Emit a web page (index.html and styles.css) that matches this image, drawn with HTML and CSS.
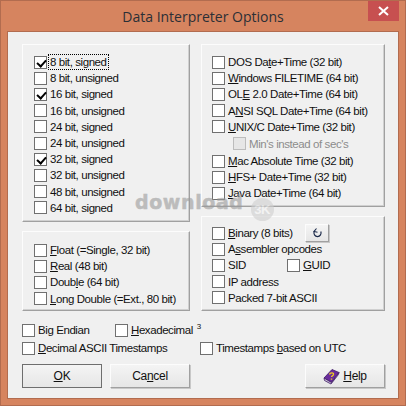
FILE: index.html
```
<!DOCTYPE html>
<html>
<head lang="en">
    <meta charset="UTF-8">
    <title>Data Interpreter Options</title>
    <link rel="stylesheet" href="styles.css">
</head>
<body>
<div class="window">
    <div class="titlebar">
        <span class="title">Data Interpreter Options</span>
        <span class="close">
            <svg width="11" height="10" viewBox="0 0 11 10"><path d="M1 1L10 9M10 1L1 9" stroke="#fff" stroke-width="2" fill="none"/></svg>
        </span>
    </div>
    <div class="client">
        <div class="columns">
            <div class="col col_left">
                <div class="panel panel_ints">
                    <label class="row"><span class="box on"></span><span class="focus">8 bit, signed</span></label>
                    <label class="row"><span class="box"></span><span>8 bit, unsigned</span></label>
                    <label class="row"><span class="box on"></span><span>16 bit, signed</span></label>
                    <label class="row"><span class="box"></span><span>16 bit, unsigned</span></label>
                    <label class="row"><span class="box"></span><span>24 bit, signed</span></label>
                    <label class="row"><span class="box"></span><span>24 bit, unsigned</span></label>
                    <label class="row"><span class="box on"></span><span>32 bit, signed</span></label>
                    <label class="row"><span class="box"></span><span>32 bit, unsigned</span></label>
                    <label class="row"><span class="box"></span><span>48 bit, unsigned</span></label>
                    <label class="row"><span class="box"></span><span>64 bit, signed</span></label>
                </div>
                <div class="panel panel_floats">
                    <label class="row"><span class="box"></span><span><u>F</u>loat (=Single, 32 bit)</span></label>
                    <label class="row"><span class="box"></span><span><u>R</u>eal (48 bit)</span></label>
                    <label class="row"><span class="box"></span><span>Doub<u>l</u>e (64 bit)</span></label>
                    <label class="row"><span class="box"></span><span><u>L</u>ong Double (=Ext., 80 bit)</span></label>
                </div>
            </div>
            <div class="col col_right">
                <div class="panel panel_dates">
                    <label class="row"><span class="box"></span><span>DOS Da<u>t</u>e+Time (32 bit)</span></label>
                    <label class="row"><span class="box"></span><span><u>W</u>indows FILETIME (64 bit)</span></label>
                    <label class="row"><span class="box"></span><span>OL<u>E</u> 2.0 Date+Time (64 bit)</span></label>
                    <label class="row"><span class="box"></span><span>A<u>N</u>SI SQL Date+Time (64 bit)</span></label>
                    <label class="row"><span class="box"></span><span><u>U</u>NIX/C Date+Time (32 bit)</span></label>
                    <label class="row row_sub disabled"><span class="box"></span><span>Min's instead of sec's</span></label>
                    <label class="row"><span class="box"></span><span><u>M</u>ac Absolute Time (32 bit)</span></label>
                    <label class="row"><span class="box"></span><span><u>H</u>FS+ Date+Time (32 bit)</span></label>
                    <label class="row"><span class="box"></span><span><u>J</u>ava Date+Time (64 bit)</span></label>
                </div>
                <div class="panel panel_misc">
                    <div class="row">
                        <label class="cell cell_binary"><span class="box"></span><span><u>B</u>inary (8 bits)</span></label>
                        <button class="btn btn_small">
                            <svg width="11" height="11" viewBox="0 0 11 11"><path d="M2.2 3.5A3.6 3.6 0 1 0 8.8 3.5" stroke="#1b2a4a" stroke-width="1.2" fill="none"/><path d="M4.5 0.5L2 3.5L5.5 4.2" stroke="#1b2a4a" stroke-width="1.1" fill="none"/></svg>
                        </button>
                    </div>
                    <label class="row"><span class="box"></span><span>A<u>s</u>sembler opcodes</span></label>
                    <div class="row">
                        <label class="cell cell_sid"><span class="box"></span><span>SID</span></label>
                        <label class="cell"><span class="box"></span><span><u>G</u>UID</span></label>
                    </div>
                    <label class="row"><span class="box"></span><span>IP address</span></label>
                    <label class="row"><span class="box"></span><span>Packed 7-bit ASCII</span></label>
                </div>
            </div>
        </div>
        <div class="options">
            <div class="opt_row">
                <label class="cell cell_big"><span class="box"></span><span>Bi<u>g</u> Endian</span></label>
                <label class="cell"><span class="box"></span><span><u>H</u>exadecimal <sup class="note">3</sup></span></label>
            </div>
            <div class="opt_row">
                <label class="cell cell_dec"><span class="box"></span><span><u>D</u>ecimal ASCII Timestamps</span></label>
                <label class="cell"><span class="box"></span><span>Timestamps <u>b</u>ased on UTC</span></label>
            </div>
        </div>
        <div class="buttons">
            <button class="btn btn_main btn_default"><span><u>O</u>K</span></button>
            <button class="btn btn_main"><span>Ca<u>n</u>cel</span></button>
            <button class="btn btn_main btn_help">
                <svg width="17" height="17" viewBox="0 0 17 17">
                    <path d="M1 10L9 1.5L16 4.5L8.5 14.5Z" fill="#6a2c9c" stroke="#3d1a66" stroke-width="0.8"/>
                    <path d="M1 10L1.5 12.5L8 16L15.5 6.5L16 4.5L8.5 14.5Z" fill="#c8bdd6" stroke="#3d1a66" stroke-width="0.8"/>
                    <path d="M6.5 6.5C7 4.5 11 4 10.5 6.5C10.2 7.8 8.7 7.6 8.5 9" stroke="#f2d21f" stroke-width="1.3" fill="none"/>
                    <path d="M7.8 10.5h1.4v1.2h-1.4z" fill="#f2d21f"/>
                </svg>
                <span><u>H</u>elp</span>
            </button>
        </div>
    </div>
    <div class="watermark"><span class="wm_text">download</span><span class="wm_badge">3K</span></div>
</div>
</body>
</html>
```

FILE: styles.css
```
*{
    margin: 0;
    padding: 0;
    box-sizing: border-box;
}
body{
    width: 406px;
    height: 406px;
    overflow: hidden;
    font-family: "Liberation Sans", Arial, sans-serif;
    font-size: 11.5px;
    letter-spacing: -0.42px;
    color: #101010;
}
.window{
    position: relative;
    width: 406px;
    height: 406px;
    background: #d6845f;
    border: 1px solid #b26c4f;
    padding: 0 6px 6px;
    display: flex;
    flex-direction: column;
}
.titlebar{
    height: 30px;
    display: flex;
    justify-content: center;
    align-items: center;
    position: relative;
}
.title{
    font-family: "Open Sans", sans-serif;
    font-size: 14px;
    letter-spacing: 0;
    color: #2b2f36;
}
.close{
    position: absolute;
    right: 0;
    top: 0;
    width: 31px;
    height: 20px;
    background: #c75050;
    display: flex;
    align-items: center;
    justify-content: center;
}
.client{
    flex: 1;
    background: #f0f0f0;
    border: 1px solid #b26c4f;
    padding: 12px 13px 0 14px;
}
.columns{
    display: flex;
    gap: 11px;
}
.col{
    display: flex;
    flex-direction: column;
    gap: 9px;
}
.col_left{
    width: 168px;
}
.col_right{
    width: 184px;
}
.panel{
    border: 1px solid #a0a0a0;
    border-color: #fcfcfc #a0a0a0 #a0a0a0 #fcfcfc;
    box-shadow: inset -1px -1px 0 #d0d0d0;
    padding: 9px 11px 0;
}
.panel_ints{
    height: 178px;
}
.panel_floats{
    height: 80px;
    padding-top: 10px;
}
.panel_dates{
    height: 163px;
    padding-left: 10px;
}
.panel_misc{
    height: 95px;
    padding: 8px 0 0 10px;
}
.row{
    display: flex;
    align-items: center;
    height: 16.2px;
    white-space: nowrap;
}
.row_sub{
    padding-left: 21px;
    height: 18px;
}
.cell{
    display: flex;
    align-items: center;
    white-space: nowrap;
}
.box{
    width: 13px;
    height: 13px;
    border: 1px solid #707070;
    background: #fff;
    margin-right: 3px;
    flex: none;
    position: relative;
}
.box.on::after{
    content: "";
    position: absolute;
    left: 2px;
    top: 1px;
    width: 7px;
    height: 4px;
    border-left: 2.2px solid #000;
    border-bottom: 2.2px solid #000;
    transform: rotate(-48deg) translate(-1px, 1px);
}
.focus{
    outline: 1px dotted #000;
    height: 14px;
    line-height: 14px;
    margin-left: -1px;
    padding: 0 1px;
}
.disabled{
    color: #8c8c8c;
}
.disabled .box{
    background: #e6e6e6;
    border-color: #bcbcbc;
}
.cell_binary{
    width: 93px;
}
.cell_sid{
    width: 75px;
}
.btn{
    font-family: inherit;
    font-size: 12px;
    letter-spacing: -0.3px;
    color: #101010;
    background: linear-gradient(#f4f4f4, #e6e6e6);
    border: 1px solid #fcfcfc;
    border-right-color: #a0a0a0;
    border-bottom-color: #a0a0a0;
    box-shadow: 1px 1px 0 #c8c8c8;
    display: flex;
    align-items: center;
    justify-content: center;
}
.btn_small{
    width: 24px;
    height: 18px;
}
.options{
    margin-top: 10px;
}
.opt_row{
    display: flex;
    height: 18px;
    align-items: center;
}
.cell_big{
    width: 93px;
}
.cell_dec{
    width: 178px;
}
.note{
    font-size: 8px;
    margin-left: 1px;
    line-height: 0;
}
.buttons{
    display: flex;
    margin-top: 7px;
    gap: 8px;
}
.btn_main{
    width: 80px;
    height: 24px;
}
.btn_default{
    border: 1px solid #6e6e6e;
    box-shadow: none;
}
.btn_help{
    margin-left: auto;
    gap: 3px;
}
.watermark{
    position: absolute;
    left: 134px;
    top: 190px;
    display: flex;
    align-items: flex-start;
    gap: 7px;
    opacity: 0.6;
    pointer-events: none;
}
.wm_text{
    font-family: "DejaVu Sans", sans-serif;
    font-weight: bold;
    font-size: 19px;
    letter-spacing: 0.6px;
    color: #9a9a9a;
    -webkit-text-stroke: 0.5px #9a9a9a;
}
.wm_badge{
    width: 23px;
    height: 23px;
    margin-top: 7px;
    border-radius: 50%;
    background: #cfcfcf;
    color: #f4f4f4;
    font-weight: bold;
    font-size: 13px;
    display: flex;
    align-items: center;
    justify-content: center;
}
```
